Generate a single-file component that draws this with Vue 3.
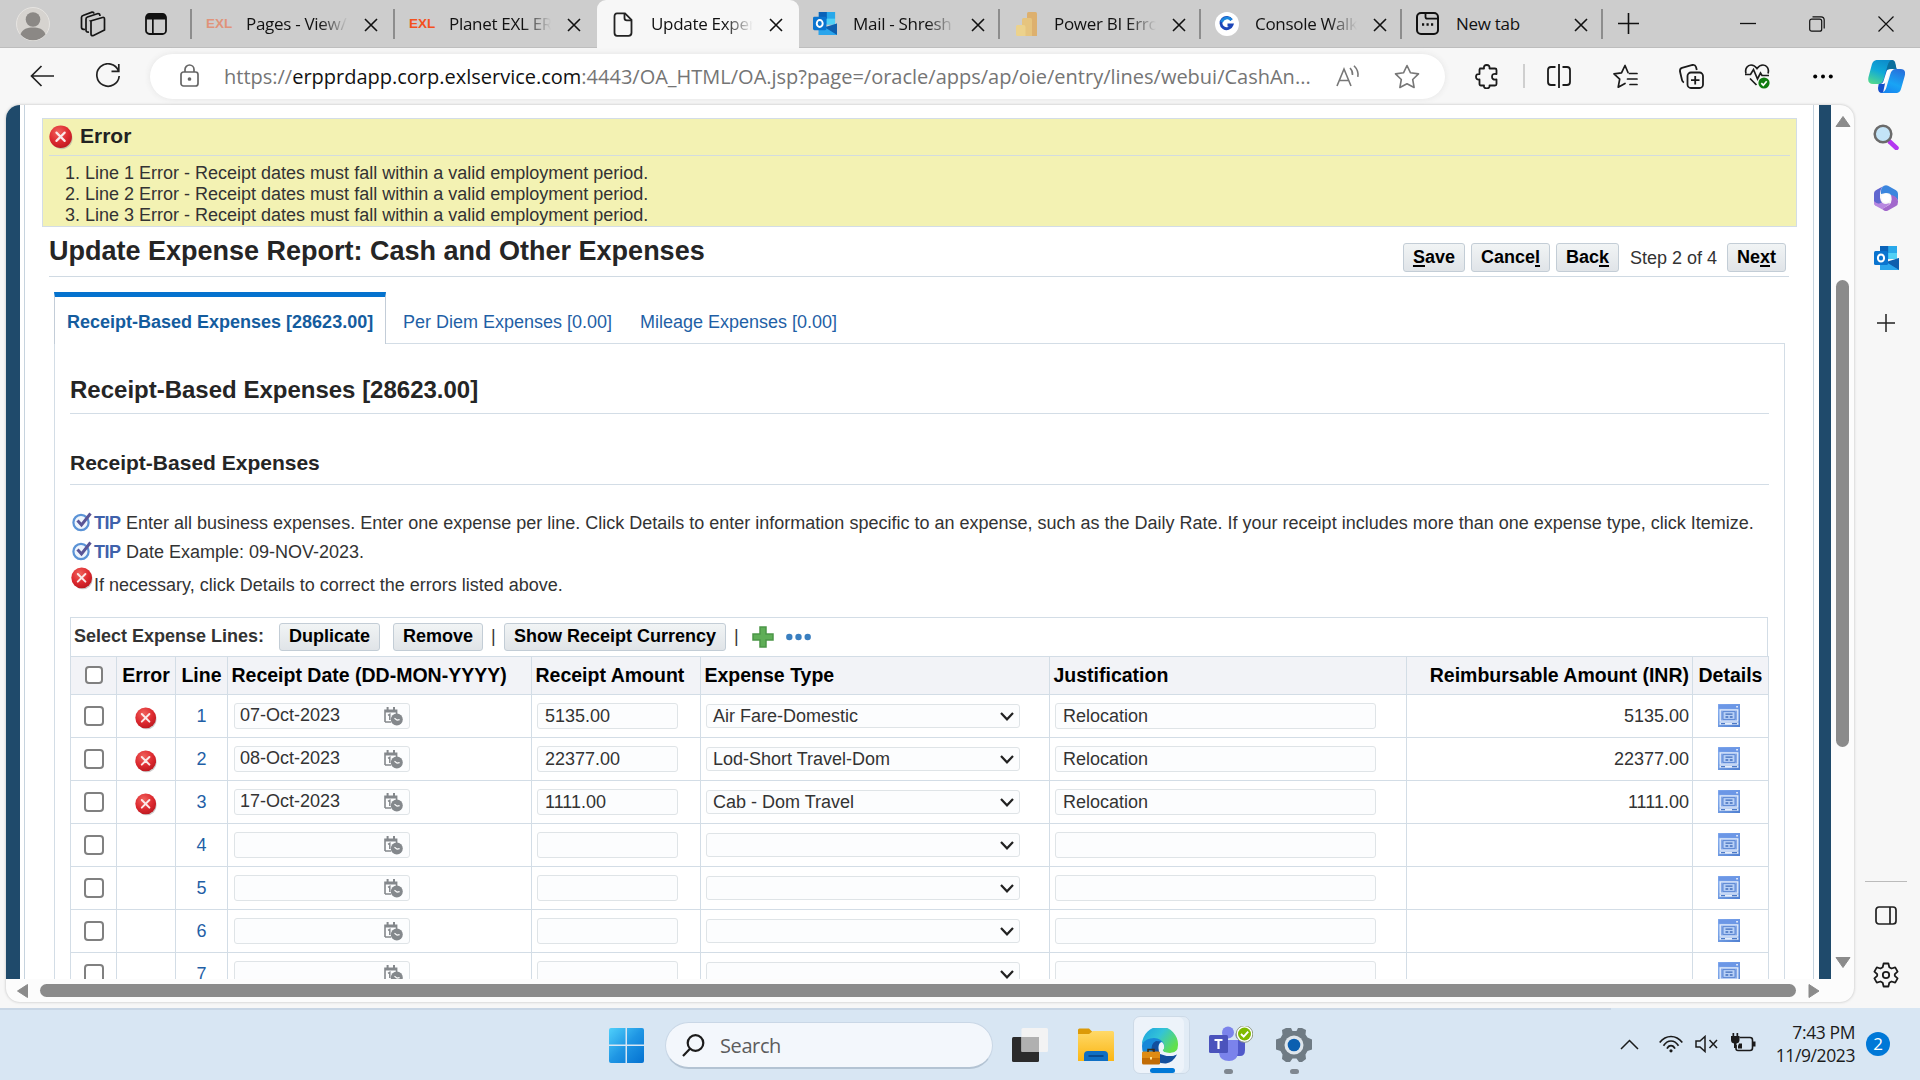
<script setup>
const tabs = [
  { title: 'Pages - View/', icon: 'exl-dim', w: 203, fade: true, sep: true },
  { title: 'Planet EXL ER', icon: 'exl', w: 202, fade: true, sep: false },
  { title: 'Update Exper', icon: 'page', w: 202, fade: true, sep: false, active: true },
  { title: 'Mail - Shresh', icon: 'outlook', w: 201, fade: true, sep: true },
  { title: 'Power BI Erro', icon: 'pbi', w: 201, fade: true, sep: true },
  { title: 'Console Walk', icon: 'g', w: 201, fade: true, sep: true },
  { title: 'New tab', icon: 'newtab', w: 201, fade: false, sep: true }
]

const errors = [1, 2, 3]

const rows = [
  { line: 1, date: '07-Oct-2023', amount: '5135.00', type: 'Air Fare-Domestic', note: 'Relocation', err: true },
  { line: 2, date: '08-Oct-2023', amount: '22377.00', type: 'Lod-Short Travel-Dom', note: 'Relocation', err: true },
  { line: 3, date: '17-Oct-2023', amount: '1111.00', type: 'Cab - Dom Travel', note: 'Relocation', err: true },
  { line: 4 },
  { line: 5 },
  { line: 6 },
  { line: 7 }
]
</script>

<template>
  <div class="screen">
    <svg class="defs" width="0" height="0">
      <defs>
        <radialGradient id="redg" cx=".4" cy=".3" r=".8"><stop offset="0" stop-color="#f0625c" /><stop offset=".55" stop-color="#dd2a30" /><stop offset="1" stop-color="#b5141c" /></radialGradient>
        <linearGradient id="blu" x1="0" y1="0" x2="1" y2="1"><stop offset="0" stop-color="#8db4f3" /><stop offset="1" stop-color="#4f7fd0" /></linearGradient>
        <linearGradient id="win" x1="0" y1="0" x2="1" y2="1"><stop offset="0" stop-color="#4fd0fb" /><stop offset=".5" stop-color="#1f96e4" /><stop offset="1" stop-color="#0471d0" /></linearGradient>
        <linearGradient id="edgeTop" x1="0" y1="0" x2="1" y2=".6"><stop offset="0" stop-color="#1a9fe0" /><stop offset=".5" stop-color="#33c3d8" /><stop offset="1" stop-color="#62e04c" /></linearGradient>
        <linearGradient id="cpA" x1=".6" y1="0" x2=".2" y2="1"><stop offset="0" stop-color="#0d8ecc" /><stop offset=".45" stop-color="#10a9d8" /><stop offset="1" stop-color="#52d98d" /></linearGradient>
        <linearGradient id="cpB" x1=".7" y1="0" x2=".3" y2="1"><stop offset="0" stop-color="#2772dc" /><stop offset=".6" stop-color="#18a4f5" /><stop offset="1" stop-color="#1787f0" /></linearGradient>
        <linearGradient id="fold" x1="0" y1="0" x2="0" y2="1"><stop offset="0" stop-color="#ffd968" /><stop offset="1" stop-color="#fbb614" /></linearGradient>
      </defs>
      <symbol id="err" viewBox="0 0 22 23">
        <circle cx="11.8" cy="12.5" r="9.8" fill="#999" opacity=".5" />
        <circle cx="10.7" cy="10.8" r="10.400" fill="url(#redg)" />
        <path d="M6.8 7l7.6 7.6M14.4 7l-7.6 7.6" stroke="#fbe9e9" stroke-width="2" stroke-linecap="round" />
      </symbol>
      <symbol id="tip" viewBox="0 0 22 20">
        <circle cx="9" cy="10.5" r="7.6" fill="#eef5fd" stroke="#5b93d6" stroke-width="2.2" />
        <path d="M5.5 8.5l4 4.500L18.5 1.500" fill="none" stroke="#5a5596" stroke-width="3" />
      </symbol>
      <symbol id="cal" viewBox="0 0 19 19">
        <path d="M1 15V3.4h11.6V7M1 15h6" fill="none" stroke="#84888c" stroke-width="1.6" />
        <path d="M1 3h12v2.4H1zM2.6 0h2v4h-2zM9 0h2v4H9z" fill="#84888c" />
        <path d="M4 8.3l1.8-1V13" fill="none" stroke="#84888c" stroke-width="1.5" />
        <circle cx="12.8" cy="12.6" r="6" fill="#84888c" />
        <path d="M10.5 11.3l2.6 1.9 2.5-.5" fill="none" stroke="#fff" stroke-width="1.2" />
      </symbol>
      <symbol id="det" viewBox="0 0 22 23">
        <path d="M0 0h22v23H0z" fill="url(#blu)" />
        <path d="M.5.5h21v4.2H.5z" fill="#6c97e6" />
        <path d="M18.3 2h1.5v1.5h-1.5z" fill="#fff" />
        <path d="M2.200 5.800h17.600v11.400H2.200z" fill="#86a9e8" stroke="#e4edfb" stroke-width="1.300" />
        <path d="M5 7.600h12v7.800H5z" fill="#b9d1f7" stroke="#5d88d3" stroke-width="1" />
        <path d="M7.500 10.200h7M7.500 13h2.800M11.800 13h2.800" stroke="#3f6cbb" stroke-width="1.300" />
        <path d="M1.500 18.300h19v2.500h-19z" fill="#e4edfb" />
        <path d="M3 19.600h4M14 19.600h5" stroke="#4c7ac7" stroke-width="1.4" />
      </symbol>
      <symbol id="olk" viewBox="0 0 25 24">
        <path d="M6 0h17v13H6z" fill="#35b8f1" /><path d="M6 0h8.5v7H6z" fill="#0a62b8" /><path d="M14.500 0H23v7h-8.5z" fill="#28a8ea" />
        <path d="M14.500 7H23v6h-8.500z" fill="#50d0f5" /><path d="M6 12l10 5 9-5v12H6z" fill="#1685da" /><path d="M25 12v12L12 16z" fill="#0f5fae" /><path d="M6 24h19L12 16l-6 2z" fill="#2aa5ec" />
        <rect x="0" y="5" width="14" height="14" rx="1.5" fill="#0a74cf" />
        <ellipse cx="7" cy="12" rx="3.1" ry="3.6" fill="none" stroke="#fff" stroke-width="2" />
      </symbol>
    </svg>

    <header class="tabstrip">
      <div class="lead">
        <svg class="avatar" width="34" height="34" viewBox="0 0 34 34"><circle cx="17" cy="17" r="16.500" fill="#d6d3cf" stroke="#e6e4e1" /><circle cx="17" cy="12.500" r="7.300" fill="#8b8885" /><path d="M4.500 27.500c2-6 7-7 12.500-7s10.500 1 12.500 7A16.500 16.500 0 0 1 4.500 27.500z" fill="#8b8885" /></svg>
        <svg class="spaces" width="26" height="26" viewBox="0 0 26 26" fill="none" stroke="#151515" stroke-width="1.700"><path d="M10.500 9.500L22.500 6q2-.5 2 1.500v11l-11 5.500q-2.500.8-2.500-1.500V10z" transform="translate(0 .5)" /><path d="M9 21q-3 .5-3-2V8q0-1.500 1.500-2L18 2.500q2 0 2 2.500" /><path d="M5 18.500q-3.500 0-3.500-2V6.500q0-1.500 1.500-2L12 1.200q1.800-.2 2 1.500" /></svg>
        <svg class="tabact" width="22" height="22" viewBox="0 0 22 22"><rect x="1" y="1" width="20" height="20" rx="3.500" fill="none" stroke="#111" stroke-width="1.800" /><path d="M1 6.500V4a3 3 0 0 1 3-3h14a3 3 0 0 1 3 3v2.500zM7 6h1.700v15H7z" fill="#111" /></svg>
      </div>
      <div v-for="t in tabs" :key="t.title" class="tab" :class="{ active: t.active, sep: t.sep }" :style="{ width: t.w + 'px' }">
        <span class="fav">
          <b v-if="t.icon === 'exl'" class="exl">EXL</b>
          <b v-else-if="t.icon === 'exl-dim'" class="exl dim">EXL</b>
          <svg v-else-if="t.icon === 'page'" width="25" height="25" viewBox="0 0 25 25" fill="none" stroke="#222" stroke-width="1.800"><path d="M6 1.300h8l6.500 6.500v13q0 3-3 3H6q-2.500 0-2.500-3v-16q0-3.500 2.500-3.500z" /><path d="M13.500 1.500V6q0 2.300 2.300 2.300h4.500" /></svg>
          <svg v-else-if="t.icon === 'outlook'" width="24" height="23"><use href="#olk" /></svg>
          <svg v-else-if="t.icon === 'pbi'" width="24" height="24" viewBox="0 0 24 24"><path d="M13 1.500Q13 0 14.500 0h7Q23 0 23 1.500V24H13z" fill="#ddb06e" /><path d="M8 7.500Q8 6 9.500 6h7Q18 6 18 7.500V24H8z" fill="#e6c47e" /><path d="M2 14.500Q2 13 3.500 13h6q2 0 2 2v9h-8Q2 24 2 22.500z" fill="#ecd28c" /></svg>
          <svg v-else-if="t.icon === 'g'" width="24" height="24" viewBox="0 0 24 24"><circle cx="12" cy="12" r="12" fill="#fff" /><path d="M16.500 8A5.700 5.700 0 1 0 17 13h-4.500" fill="none" stroke="#1d46b8" stroke-width="2.800" /><path d="M6.600 10A5.700 5.700 0 0 1 16.500 8" fill="none" stroke="#1b86dd" stroke-width="2.800" /></svg>
          <svg v-else width="23" height="23" viewBox="0 0 23 23"><rect x="1" y="1" width="21" height="21" rx="4" fill="none" stroke="#111" stroke-width="2" /><path d="M9.500 1v4q0 1.700 1.700 1.700H22" fill="none" stroke="#111" stroke-width="1.800" /><path d="M6 12.500h2.200M10.500 12.500h2.200M15 12.500h2.200" stroke="#111" stroke-width="2.400" /></svg>
        </span>
        <span class="ttl" :class="{ fade: t.fade }">{{ t.title }}</span>
        <svg class="x" width="14" height="14" viewBox="0 0 14 14"><path d="M1 1l12 12M13 1L1 13" stroke="#111" stroke-width="1.600" /></svg>
      </div>
      <svg class="plus" width="21" height="21" viewBox="0 0 21 21"><path d="M10.500 0v21M0 10.500h21" stroke="#111" stroke-width="1.600" /></svg>
      <div class="winbtns">
        <svg width="16" height="16" viewBox="0 0 16 16"><path d="M0 7.500h16" stroke="#111" stroke-width="1.300" /></svg>
        <svg width="16" height="16" viewBox="0 0 16 16" fill="none" stroke="#111" stroke-width="1.200"><rect x=".7" y="3.200" width="12" height="12" rx="2" /><path d="M3.500.8h8.500q3.200 0 3.200 3.200v8.500" /></svg>
        <svg width="16" height="16" viewBox="0 0 16 16"><path d="M.5.500l15 15M15.500.500l-15 15" stroke="#111" stroke-width="1.200" /></svg>
      </div>
    </header>

    <div class="toolbar">
      <span class="slot"><svg width="24" height="22" viewBox="0 0 24 22" fill="none" stroke="#222" stroke-width="1.700"><path d="M24 11H1.500M11.500 1L1.500 11l10 10" /></svg></span>
      <span class="slot"><svg width="26" height="26" viewBox="0 0 26 26" fill="none" stroke="#222" stroke-width="1.700"><path d="M23.500 8A11.200 11.200 0 1 0 24.200 13M23.800 1v7.300h-7.300" /></svg></span>
      <div class="address">
        <svg class="lock" width="19" height="24" viewBox="0 0 19 24" fill="none" stroke="#666" stroke-width="1.700"><rect x="1" y="8" width="17" height="14" rx="2.500" /><path d="M5 8V5.500a4.500 4.500 0 0 1 9 0V8" /><circle cx="9.500" cy="15" r="1" fill="#666" /></svg>
        <span class="url">https://<em>erpprdapp.corp.exlservice.com</em>:4443/OA_HTML/OA.jsp?page=/oracle/apps/ap/oie/entry/lines/webui/CashAn...</span>
        <svg class="read" width="24" height="22" viewBox="0 0 24 22" fill="none" stroke="#777" stroke-width="1.600"><path d="M1 21L8 4l7 17M3.500 15.500h9M14 3q3 3 2.500 7M18 .8q5 5 3.800 11" /></svg>
        <svg class="star" width="26" height="25" viewBox="0 0 26 25" fill="none" stroke="#777" stroke-width="1.600" stroke-linejoin="round"><path d="M13 1.500l3.500 7.300 8 1.100-5.800 5.600 1.400 8L13 19.700l-7.100 3.800 1.400-8L1.500 9.900l8-1.100z" /></svg>
      </div>
      <span class="slot puzzle"><svg width="25" height="25" viewBox="0 0 25 25" fill="none" stroke="#1b1b1b" stroke-width="1.800" stroke-linejoin="round"><path d="M5 4.500h4q-.5-3.500 2.700-3.500t2.800 3.500h5.500q1.500 0 1.500 1.500v4q-4.500-.8-4.500 2.700t4.500 2.700V20q0 1.500-1.500 1.500h-5.500q.4 2.800-2.800 2.800T9 21.500H6q-1.500 0-1.500-1.500v-4.500q-3.500.5-3.500-2.700t3.500-2.700V6q0-1.500 1-1.500z" /></svg></span>
      <i class="tsep"></i>
      <span class="slot"><svg width="24" height="24" viewBox="0 0 24 24" fill="none" stroke="#1b1b1b" stroke-width="1.800"><path d="M12 0v24M8.500 3H4Q1 3 1 6v12q0 3 3 3h4.500M15.500 3H20q3 0 3 3v12q0 3-3 3h-4.500" /></svg></span>
      <span class="slot"><svg width="25" height="25" viewBox="0 0 25 25" fill="none" stroke="#1b1b1b" stroke-width="1.700" stroke-linejoin="round" stroke-linecap="round"><path d="M15 8.500l-3-7-3.500 7.300-7.500 1 5.700 5.400-1.500 8L12 19.500M16.500 9.500H24M14.500 15H24M17 20.500h7" /></svg></span>
      <span class="slot"><svg width="25" height="25" viewBox="0 0 25 25" fill="none" stroke="#1b1b1b" stroke-width="1.800"><rect x="8.500" y="8.500" width="15.500" height="15.500" rx="3.500" /><path d="M16.200 12v8.500M12 16.200h8.500M5 18.500Q3.500 18 3 16L1 7.500Q.7 4.500 3 3.800L13.500 1q2.700-.4 3.500 2l.8 3" /></svg></span>
      <span class="slot"><svg width="26" height="26" viewBox="0 0 26 26" fill="none" stroke="#1b1b1b" stroke-width="1.700"><path d="M2 10.500C.5 5 4 2 7 2q3.500 0 6 3.500Q15.500 2 19 2c3.500 0 6.500 3.500 5 8.500M1 11.500h5.500l3-5 4 9.500 3-6 1.500 2.500h7M6 15.500L12.500 22" /><circle cx="20" cy="20" r="5.600" fill="#107c10" stroke="none" /><path d="M17.300 20.200l2 2 3.400-4" stroke="#fff" /></svg></span>
      <span class="slot"><svg width="20" height="5" viewBox="0 0 20 5"><circle cx="2.200" cy="2.500" r="2" /><circle cx="10" cy="2.500" r="2" /><circle cx="17.800" cy="2.500" r="2" /></svg></span>
      <svg class="copilot" width="37" height="33" viewBox="0 0 37 33"><path d="M22 0q4 0 4.800 3l1.700 6H20l-5 24h-1q-4 0-4-5l1-6z" fill="#1550cc" /><path d="M19 5q1.500-5 5-5 3 0 3.500 4l1 5h-5q-4 0-5 5z" fill="#0b6f9d" /><path d="M8.500 0H24q-3 .5-4.300 5L16 18.500q-1.500 5.500-6 5.500H5Q-1 24 .5 17L4 4Q5.200.5 8.500 0z" fill="url(#cpA)" /><path d="M29 33H13q4-1 5.200-5l4-13.500Q23.500 9 28 9h4.500q6 0 4.200 7L33 29q-1 3.500-4 4z" fill="url(#cpB)" /><path d="M24 9.500h-3.500q-1.500 0-2 2L15.500 21q-1 3-3.500 3h3.500q2 0 3-3l3-8.500q.8-3 2.500-3z" fill="#fff" /></svg>
    </div>

    <div class="middle">
      <section class="page">
        <div class="viewrow">
          <div class="view">
            <div class="sheet">
              <div class="errbox">
                <div class="errhead"><svg width="24" height="25"><use href="#err" /></svg><b>Error</b></div>
                <div v-for="n in errors" :key="n" class="errline">{{ n }}. Line {{ n }} Error - Receipt dates must fall within a valid employment period.</div>
              </div>

              <div class="titlebar">
                <h1>Update Expense Report: Cash and Other Expenses</h1>
                <button style="width: 62px"><u>S</u>ave</button>
                <button style="width: 79px">Cance<u>l</u></button>
                <button style="width: 63px">Bac<u>k</u></button>
                <span class="step">Step 2 of 4</span>
                <button style="width: 59px">Ne<u>x</u>t</button>
              </div>

              <nav class="subtabs">
                <b class="cur">Receipt-Based Expenses [28623.00]</b>
                <a class="pd">Per Diem Expenses [0.00]</a>
                <a class="mi">Mileage Expenses [0.00]</a>
              </nav>

              <div class="panel">
                <h2>Receipt-Based Expenses [28623.00]</h2>
                <h3>Receipt-Based Expenses</h3>
                <p class="tip t1"><svg width="22" height="24"><use href="#tip" /></svg><b>TIP</b><span class="long">Enter all business expenses. Enter one expense per line. Click Details to enter information specific to an expense, such as the Daily Rate. If your receipt includes more than one expense type, click Itemize.</span></p>
                <p class="tip"><svg width="22" height="24"><use href="#tip" /></svg><b>TIP</b><span>Date Example: 09-NOV-2023.</span></p>
                <p class="need"><svg width="22" height="23"><use href="#err" /></svg><span>If necessary, click Details to correct the errors listed above.</span></p>

                <div class="actions">
                  <b class="sel">Select Expense Lines:</b>
                  <button class="b-dup">Duplicate</button>
                  <button class="b-rem">Remove</button>
                  <span class="bar b1">|</span>
                  <button class="b-show">Show Receipt Currency</button>
                  <span class="bar b2">|</span>
                  <svg class="add" width="22" height="22" viewBox="0 0 22 22"><path d="M8 1h6v7h7v6h-7v7H8v-7H1V8h7z" fill="#5fae57" stroke="#4c9648" stroke-width="1.500" /></svg>
                  <svg width="25" height="8" viewBox="0 0 25 8" fill="#3a7fc0"><circle cx="3.300" cy="4" r="3.200" /><circle cx="12.500" cy="4" r="3.200" /><circle cx="21.700" cy="4" r="3.200" /></svg>
                </div>

                <div class="grid head">
                  <div class="c ctr"><i class="chk sm"></i></div>
                  <div class="c ctr">Error</div>
                  <div class="c ctr">Line</div>
                  <div class="c">Receipt Date (DD-MON-YYYY)</div>
                  <div class="c">Receipt Amount</div>
                  <div class="c">Expense Type</div>
                  <div class="c">Justification</div>
                  <div class="c rgt">Reimbursable Amount (INR)</div>
                  <div class="c ctr">Details</div>
                </div>
                <div v-for="r in rows" :key="r.line" class="grid">
                  <div class="c ctr"><i class="chk"></i></div>
                  <div class="c ctr"><svg v-if="r.err" class="rowerr" width="22" height="23"><use href="#err" /></svg></div>
                  <div class="c ctr num">{{ r.line }}</div>
                  <div class="c"><div class="inp date"><span>{{ r.date }}</span><svg width="19" height="19"><use href="#cal" /></svg></div></div>
                  <div class="c"><div class="inp amt">{{ r.amount }}</div></div>
                  <div class="c"><div class="inp type"><span>{{ r.type }}</span><svg width="14" height="9" viewBox="0 0 14 9"><path d="M1 1l6 6.300L13 1" fill="none" stroke="#222" stroke-width="2.200" /></svg></div></div>
                  <div class="c"><div class="inp note">{{ r.note }}</div></div>
                  <div class="c rgt">{{ r.amount }}</div>
                  <div class="c ctr"><svg class="rowdet" width="22" height="23"><use href="#det" /></svg></div>
                </div>
              </div>
            </div>
          </div>
          <div class="vscroll">
            <svg width="16" height="11" viewBox="0 0 16 11"><path d="M8 .5l7 10H1z" fill="#8b8b8b" stroke="#8b8b8b" stroke-linejoin="round" /></svg>
            <i class="vthumb"></i>
            <svg class="down" width="16" height="11" viewBox="0 0 16 11"><path d="M8 10.500L1 .5h14z" fill="#8b8b8b" stroke="#8b8b8b" stroke-linejoin="round" /></svg>
          </div>
        </div>
        <div class="hscroll">
          <svg width="11" height="14" viewBox="0 0 11 14"><path d="M.5 7l10-6.500v13z" fill="#8b8b8b" stroke="#8b8b8b" stroke-linejoin="round" /></svg>
          <i class="hthumb"></i>
          <svg width="12" height="14" viewBox="0 0 12 14"><path d="M11 7L1 .5v13z" fill="#8b8b8b" stroke="#8b8b8b" stroke-linejoin="round" /></svg>
        </div>
      </section>

      <aside class="side">
        <svg width="26" height="26" viewBox="0 0 26 26"><path d="M16.500 17.500l7 6.500" stroke="#b436f0" stroke-width="4.500" stroke-linecap="round" /><circle cx="10" cy="10" r="8.300" fill="#c3e4f8" stroke="#6b6b6b" stroke-width="2.500" /></svg>
        <svg class="m365" width="24" height="26" viewBox="0 0 24 26"><path d="M10 .8L2 5.200Q0 6.400 0 8.700V17q0 3 2.500 4L8 17.500q-2-2-2-5V8q0-5 4-7.200z" fill="#a279d8" /><path d="M10 .8q2-1.200 4 0l8 4.500q2 1.200 2 3.500v7q-1-3-4-4l-3-1.500Q16 8 12 8L7 9V6q0-3.500 3-5.200z" fill="#3b86de" /><path d="M17 10q6 1 7 6v1q0 3-2 4l-8 4.500q-2 1-4 0L8 24l7-4q4-3 2-10z" fill="#a268cc" /><path d="M0 16q3 4 8 1.500Q10 19 12 19l4-1q-1 2-3 3l-5 3.300L2 21q-2-1-2-3z" fill="#b887e0" /><path d="M2 5.200L8 2Q6 5 6 9v4q0 3 2 4.500-5 2.500-8-1.500V9q0-2.500 2-3.800z" fill="#4a62cc" opacity=".75" /><circle cx="12" cy="13" r="4.500" fill="#fff" /></svg>
        <svg class="solk" width="25" height="24"><use href="#olk" /></svg>
        <svg class="splus" width="18" height="18" viewBox="0 0 18 18"><path d="M9 0v18M0 9h18" stroke="#222" stroke-width="1.500" /></svg>
        <i class="sline"></i>
        <svg class="spanel" width="22" height="19" viewBox="0 0 22 19" fill="none" stroke="#222" stroke-width="1.700"><rect x="1" y="1" width="20" height="17" rx="3" /><path d="M15 1v17" /></svg>
        <svg class="sgear" width="26" height="26" viewBox="0 0 26 26" fill="none" stroke="#1b1b1b" stroke-width="1.800" stroke-linejoin="round"><path d="M10.600 1.500h4.800l.9 3.700 2.200 1.300 3.700-1.100 2.400 4.200-2.800 2.600v1.600l2.800 2.600-2.400 4.200-3.700-1.100-2.200 1.300-.9 3.700h-4.800l-.9-3.700-2.200-1.300-3.700 1.100-2.400-4.200 2.800-2.600v-1.600L1.400 9.600l2.400-4.200 3.700 1.100 2.200-1.300z" /><circle cx="13" cy="13" r="3.200" /></svg>
      </aside>
    </div>

    <footer class="taskbar">
      <i class="tline"></i>
      <svg class="start" width="35" height="35" viewBox="0 0 35 35" fill="url(#win)"><path d="M0 2q0-2 2-2h14.500v16.500H0zM18 0h15q2 0 2 2v14.500H18zM0 18h16.500v17H2q-2 0-2-2zM18 18h17v15q0 2-2 2H18z" /></svg>
      <div class="search"><svg width="23" height="23" viewBox="0 0 23 23" fill="none" stroke="#1b1b1b" stroke-width="2.200"><circle cx="13.500" cy="9" r="7.800" /><path d="M8 14.800L1 22" /></svg><span>Search</span></div>
      <span class="app"><svg width="36" height="34" viewBox="0 0 36 34"><rect x="0" y="9" width="27" height="25" rx="1.500" fill="#2b2b2b" /><rect x="9.500" y="0" width="26.500" height="24" rx="1.500" fill="#f3f3f3" /><path d="M9.500 9H27v15H9.500z" fill="#b0b0b0" /></svg></span>
      <span class="app"><svg width="36" height="34" viewBox="0 0 36 34"><path d="M0 2Q0 .5 1.500.5h9.500l3.500 3.500V9H0z" fill="#dc9a08" /><path d="M0 6h11l4-3h19.500q1.500 0 1.500 1.500V33H0z" fill="url(#fold)" /><path d="M6 33v-6q0-4 4-4h16q4 0 4 4v6z" fill="#0f6fc4" /><path d="M10.500 28h15" stroke="#073f7f" stroke-width="1.500" /></svg></span>
      <span class="app on">
        <svg width="36" height="37" viewBox="0 0 36 37"><path d="M0 18A18 18 0 0 1 35 13L20 20l-2 16Q0 34 0 18z" fill="#1787d8" /><path d="M0 16A18 18 0 0 1 36 17q0 8-8 8-7 0-7.500-3 2.500-2 1.500-5.500Q19.500 10 12 10 4 10 0 16z" fill="url(#edgeTop)" /><path d="M14 13q-6 3-4 11 3 12 14 11.500 7-1 11-9-7 3-13 0-5.500-3-5.500-8 0-4 2.500-5z" fill="#124f9e" /><path d="M18 26q-1.500-3-1.500-6 0-5 3.200-6 3 2 2.300 5.500-.5 1.500-1.500 2.500 0 3 7.500 3 4.500 0 6.500-2l-.5 3.500q-6 2.500-11 1z" fill="#edf3fa" /><rect x="0" y="24" width="18" height="12.500" rx="1.500" fill="#c26c05" /><path d="M0 25q0-1.500 1.500-1.500h15q1.500 0 1.500 1.500v5H0z" fill="#de8b14" /><path d="M6 24v-2.500h6V24" fill="none" stroke="#3c2a12" stroke-width="1.500" /><path d="M8 29h2v2.500H8z" fill="#ffe08a" /></svg>
        <i class="ind"></i>
      </span>
      <span class="app teams">
        <svg width="44" height="36" viewBox="0 0 44 36"><circle cx="19" cy="6.500" r="6" fill="#7b83eb" /><circle cx="31" cy="9" r="4.500" fill="#5059c9" /><path d="M26 14h10v10q0 6-5 6h-5z" fill="#5059c9" /><path d="M10 14h19v13q-1 8-9 8-9 0-10-8z" fill="#7b83eb" /><rect x="0" y="9" width="19" height="18" rx="1.500" fill="#4b53bc" /><path d="M5.500 14h8M9.500 14v9" stroke="#fff" stroke-width="2.200" /><circle cx="35.500" cy="8" r="8.300" fill="#fff" stroke="#8f9a85" /><circle cx="35.500" cy="8" r="6.500" fill="#7fba00" /><path d="M32 8l2.700 2.700 4.500-5" fill="none" stroke="#fff" stroke-width="1.900" /></svg>
        <i class="dot"></i>
      </span>
      <span class="app">
        <svg width="36" height="34" viewBox="0 0 36 34"><path d="M13 0h2l1.500 3h4L22 0h4l4 2-.5 4.500 2 3L36 11.500v10l-4.500 1.500-2 3.500L30 31l-4 3h-3l-2.500-3.500h-4L14 34h-4l-4-3 .5-4.500-2-3.500L0 21.500v-10L4.500 10l2-3.500L6 2l4-2z" fill="#6f7b84" /><circle cx="18" cy="17" r="9.500" fill="#dfe6ec" /><circle cx="18" cy="17" r="6.300" fill="#0c5fb0" /></svg>
        <i class="dot"></i>
      </span>
      <div class="tray">
        <svg class="chev" width="19" height="11" viewBox="0 0 19 11"><path d="M1 10l8.500-8.500L18 10" fill="none" stroke="#1b1b1b" stroke-width="1.500" /></svg>
        <svg class="wifi" width="24" height="18" viewBox="0 0 24 18" fill="none" stroke="#1b1b1b" stroke-width="1.700"><path d="M.7 7.500Q5.500 1.500 12 1.500T23.300 7.500M4.500 10.800Q7.500 6 12 6t7.500 4.800M8 13.600q1.500-3 4-3t4 3" /><circle cx="12" cy="15.800" r="1.600" fill="#1b1b1b" stroke="none" /></svg>
        <svg class="vol" width="24" height="18" viewBox="0 0 24 18" fill="none" stroke="#1b1b1b" stroke-width="1.500"><path d="M1 6h4l5-4.500v15L5 12H1zM14.500 5l7.500 8M22 5l-7.500 8" /></svg>
        <svg class="bat" width="25" height="20" viewBox="0 0 25 20"><path d="M8.500 4.500h10.500q2.500 0 2.500 2.500v8q0 2.500-2.500 2.500H7q-2 0-2-2V12" fill="none" stroke="#1b1b1b" stroke-width="1.600" /><path d="M22 8.500h2.500v5H22zM0 3h8.500v4q0 3-3 3.500V15H3v-4.500Q0 10 0 7zM1.500 0h1.700v3H1.500zM5.500 0h1.700v3H5.500zM8 10.500h3v5H7V13z" fill="#1b1b1b" /></svg>
        <div class="clock"><span class="time">7:43 PM</span><span class="day">11/9/2023</span></div>
        <b class="badge">2</b>
      </div>
    </footer>
  </div>
</template>

<style>
body { margin: 0; }
</style>

<style scoped>
.screen { width: 1920px; height: 1080px; overflow: hidden; display: flex; flex-direction: column; background: #f7f7f7; font-family: "Liberation Sans", Arial, sans-serif; font-size: 18px; color: #333; white-space: nowrap; }
.screen * { box-sizing: border-box; }
.defs { position: absolute; }
svg { display: block; flex: none; }

.tabstrip { height: 48px; flex: none; background: #cdcdcd; display: flex; align-items: center; font-family: "Open Sans", "Noto Sans", sans-serif; color: #111; border-bottom: 1px solid #bdbdbd; }
.lead { width: 192px; height: 30px; display: flex; align-items: center; border-right: 2px solid #8d8d8d; flex: none; }
.avatar { margin-left: 16px; }
.spaces { margin-left: 30px; }
.tabact { margin-left: 39px; }
.tab { height: 30px; flex: none; display: flex; align-items: center; padding-left: 14px; border-right: 2px solid transparent; }
.tab.sep { border-right-color: #8d8d8d; }
.tab.active { height: 49px; margin-bottom: -1px; background: #f7f7f7; border-radius: 9px 9px 0 0; padding-left: 14px; }
.fav { width: 25px; display: flex; align-items: center; }
.exl { font: bold 13.500px "Liberation Sans", Arial, sans-serif; color: #f4511e; }
.exl.dim { color: #e0937a; }
.ttl { margin-left: 15px; width: 102px; font-size: 17px; letter-spacing: -.3px; line-height: 26px; }
.fade { -webkit-mask-image: linear-gradient(90deg, #000 72%, transparent 100%); mask-image: linear-gradient(90deg, #000 72%, transparent 100%); }
.x { margin-left: 16px; margin-top: 2px; }
.plus { margin-left: 15px; }
.winbtns { display: flex; gap: 53px; margin-left: 101px; }

.toolbar { height: 56px; flex: none; display: flex; align-items: center; padding-left: 9px; }
.slot { width: 66px; display: flex; justify-content: center; flex: none; }
.address { width: 1295px; height: 45px; margin-left: 9px; margin-right: 9px; border-radius: 23px; background: #fff; box-shadow: 0 0 6px #e4e4e4; display: flex; align-items: center; flex: none; }
.lock { margin-left: 30px; }
.url { margin-left: 25px; width: 1090px; font-family: "Open Sans", "Noto Sans", sans-serif; font-size: 20px; letter-spacing: -.005px; color: #757575; }
.url em { font-style: normal; color: #111; }
.read { margin-left: 22px; }
.star { margin-left: 34px; }
.puzzle { padding-left: 1px; }
.tsep { width: 2px; height: 24px; background: #cfcfcf; margin: 0 -1px 0 3px; flex: none; }
.tsep + .slot { margin-left: 2px; }
.copilot { margin-left: 12px; }

.middle { height: 904px; flex: none; display: flex; padding-left: 6px; }
.page { width: 1848px; height: 897px; margin-top: 1px; background: #fcfcfc; border-radius: 14px; overflow: hidden; box-shadow: 0 0 3px #bbb; flex: none; display: flex; flex-direction: column; }
.viewrow { display: flex; height: 874px; flex: none; }
.view { width: 1825px; height: 874px; overflow: hidden; background: #fff; border-left: 14px solid #1f4a6b; border-right: 12px solid #1f4a6b; padding: 0 5px 0 4px; flex: none; }
.sheet { border-left: 1px solid #c6d3de; border-right: 1px solid #c6d3de; height: 1000px; padding: 13px 0 0 17px; display: flex; flex-direction: column; align-items: flex-start; }
.vscroll { width: 23px; display: flex; flex-direction: column; align-items: center; padding-top: 11px; }
.vthumb { width: 13px; height: 467px; border-radius: 7px; background: #8b8b8b; margin-top: 153px; }
.down { margin-top: 210px; }
.hscroll { display: flex; align-items: center; height: 23px; padding: 0 0 0 11px; }
.hthumb { width: 1756px; height: 13px; border-radius: 7px; background: #8b8b8b; margin: 0 12px; }

.errbox { width: 1755px; height: 109px; background: #f3f2b3; border: 1px solid #d3dde6; padding: 0 6px; flex: none; }
.errhead { height: 37px; border-bottom: 1px solid #d3dcdf; display: flex; align-items: center; gap: 7px; font-size: 21px; color: #222; margin-bottom: 7px; }
.errhead b { margin-top: -3px; }
.errline { line-height: 21px; padding-left: 16px; }

.titlebar { margin-left: 7px; width: 1740px; height: 50px; border-bottom: 1px solid #d0dae3; display: flex; align-items: flex-start; flex: none; padding-top: 16px; }
h1, h2, h3, p { margin: 0; }
h1 { font-size: 27px; line-height: 30px; color: #252525; margin-top: -7px; width: 1348px; }
button { font: bold 18px/20px "Liberation Sans", Arial, sans-serif; color: #000; height: 29px; padding: 0 0 3px; border: 1px solid #c3cdd6; border-radius: 3px; background: linear-gradient(#f1f4f5, #e0e4e8); flex: none; }
.titlebar button { margin-left: 6px; padding-bottom: 2px; }
.step { margin-left: 11px; margin-right: 5px; width: 86px; line-height: 31px; }
u { text-underline-offset: 2px; text-decoration-thickness: 2px; }

.subtabs { display: flex; margin: 15px 0 0 12px; height: 52px; width: 1731px; color: #1f5fa6; line-height: 22px; flex: none; border-bottom: 1px solid #d3dde6; }
.cur { width: 332px; height: 52px; border: 1px solid #c3cdd8; border-top: 5px solid #0572ce; border-bottom: 0; background: #fff; padding: 14px 0 0 12px; color: #145c9e; flex: none; }
.pd { margin: 19px 0 0 17px; width: 237px; }
.mi { margin-top: 19px; }

.panel { margin-left: 12px; width: 1731px; height: 700px; border-left: 1px solid #d3dde6; border-right: 1px solid #d3dde6; padding: 0 15px; flex: none; }
h2 { font-size: 24px; line-height: 28px; height: 70px; padding-top: 32px; border-bottom: 1px solid #d3dde6; color: #252525; }
h3 { font-size: 21px; line-height: 24px; height: 71px; padding-top: 37px; border-bottom: 1px solid #d3dde6; color: #252525; }
.tip { display: flex; align-items: center; height: 29px; padding-left: 2px; }
.tip svg { margin-top: -3px; }
.t1 { margin-top: 24px; }
.tip b { color: #3f61ab; margin: 0 6px 0 0; letter-spacing: -.5px; width: 26px; }
.need { display: flex; height: 33px; padding-left: 1px; align-items: flex-start; }
.need span { line-height: 22px; margin-top: 7px; margin-left: 1px; }

.actions { margin-top: 17px; width: 1698px; height: 39px; border: 1px solid #d3dde6; border-bottom: 0; display: flex; align-items: center; color: #333; }
.actions button { height: 28px; }
.sel { margin-left: 3px; width: 205px; margin-top: -2px; }
.b-dup { width: 101px; }
.b-rem { width: 90px; margin-left: 13px; }
.bar { width: 5px; margin-top: -1px; }
.b1 { margin-left: 8px; margin-right: 8px; }
.b-show { width: 222px; }
.b2 { margin-left: 8px; }
.add { margin: 0 12px 0 13px; }

.grid { display: grid; width: 1699px; grid-template-columns: 46px 59px 52px 304px 169px 349px 357px 286px 77px; height: 43px; border-bottom: 1px solid #d3dde6; }
.c { border-left: 1px solid #d3dde6; display: flex; align-items: center; min-width: 0; }
.c:last-child { border-right: 1px solid #d3dde6; }
.ctr { justify-content: center; }
.rgt { justify-content: flex-end; padding-right: 3px; }
.head { height: 39px; border-top: 1px solid #d3dde6; background: #f2f3f7; font-weight: bold; font-size: 19.500px; color: #000; padding-bottom: 0; }
.head .c:not(.ctr):not(.rgt) { padding-left: 3.500px; }
.head .c { padding-bottom: 1px; }
.chk { width: 20px; height: 20px; border: 2px solid #808080; border-radius: 4px; background: #fff; }
.chk.sm { width: 18px; height: 18px; }
.rowerr { margin-top: 4px; }
.rowdet { margin: -2px 3px 0 0; }
.num { color: #1f5fa6; }
.inp { height: 26px; border: 1px solid #dfe4e7; border-radius: 3px; background: #fcfdfe; display: flex; align-items: center; margin-left: 6px; padding-left: 7px; line-height: 20px; }
.date { width: 176px; padding-left: 5px; justify-content: space-between; padding-right: 6px; }
.date span { margin-top: -2px; }
.amt { width: 141px; margin-left: 5px; }
.type { width: 314px; height: 24px; margin-left: 5px; padding-left: 6px; justify-content: space-between; padding-right: 5px; }
.note { width: 321px; margin-left: 5px; padding-left: 7px; }

.side { width: 66px; display: flex; flex-direction: column; align-items: center; padding: 20px 2px 0 0; }
.m365 { margin-top: 35px; }
.solk { margin-top: 35px; }
.splus { margin-top: 44px; }
.sline { width: 42px; height: 1px; background: #bbb; margin-top: 549px; }
.spanel { margin-top: 24px; }
.sgear { margin-top: 37px; }

.taskbar { height: 72px; flex: none; background: #d8e6f3; display: flex; position: relative; }
.tline { position: absolute; left: 0; top: 0; width: 1611px; height: 2px; background: #c8d6e5; }
.start { margin: 20px 0 0 609px; }
.search { margin: 14px 4px 0 21px; width: 328px; height: 47px; border-radius: 24px; background: #f3f7fc; border: 1px solid #c9d7e6; border-bottom: 2px solid #b3c3d3; display: flex; align-items: center; padding-left: 16px; font: 20px "Open Sans", "Noto Sans", sans-serif; color: #5c5c5c; flex: none; }
.search span { margin-left: 15px; letter-spacing: -.4px; }
.app { width: 66px; height: 72px; display: flex; flex-direction: column; align-items: center; padding-top: 20px; flex: none; position: relative; }
.on { width: 57px; height: 58px; margin: 8px 5px 0 4px; padding-top: 11px; padding-right: 4px; background: #edf3fa; border-radius: 7px; border: 1px solid #cddae7; box-shadow: inset -5px 0 0 #e2ecf6; }
.ind { position: absolute; left: 16px; bottom: 0; width: 25px; height: 5px; border-radius: 3px; background: #0078d7; }
.teams { padding-top: 18px; }
.teams svg { margin-left: 6px; }
.dot { position: absolute; left: 29px; top: 61px; width: 9px; height: 5px; border-radius: 3px; background: #7f8790; }
.tray { display: flex; align-items: center; height: 72px; margin-left: 293px; }
.wifi { margin-left: 20px; }
.vol { margin-left: 12px; }
.bat { margin-left: 12px; margin-top: -3px; }
.clock { width: 99px; display: flex; flex-direction: column; align-items: flex-end; font: 17.500px/23px "Open Sans", "Noto Sans", sans-serif; color: #1b1b1b; margin-top: -1px; letter-spacing: -.4px; }
.badge { width: 24px; height: 24px; border-radius: 12px; background: #0078d7; color: #fff; font: 17px/24px "Open Sans", sans-serif; text-align: center; margin-left: 11px; }
</style>
